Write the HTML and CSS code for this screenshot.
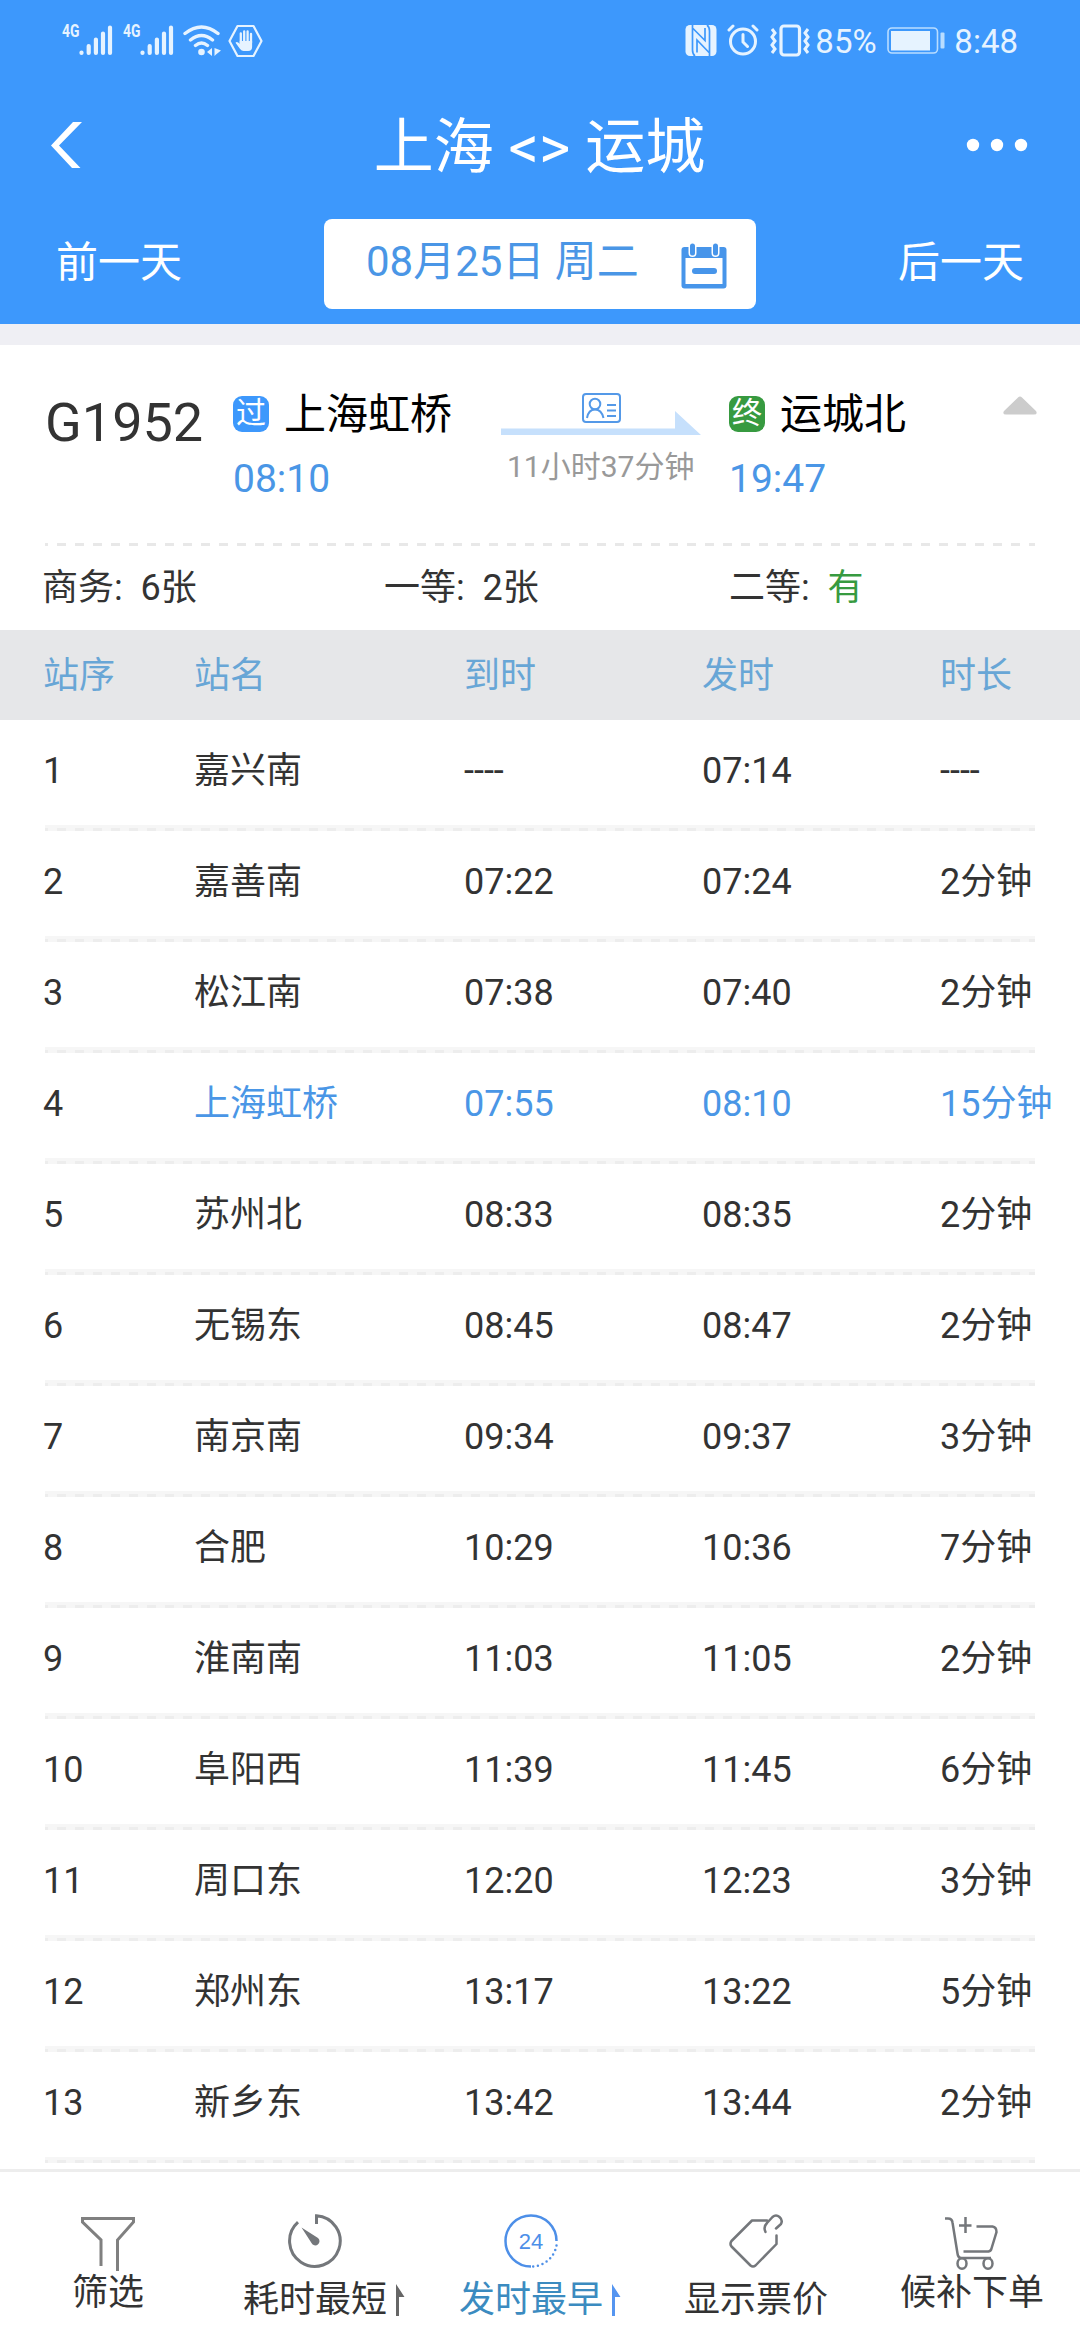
FILE: index.html
```html
<!DOCTYPE html>
<html lang="zh-CN">
<head>
<meta charset="utf-8">
<title>上海 - 运城</title>
<link rel="stylesheet" href="styles.css">
</head>
<body>
<header class="top">
  <div class="status">
    <div class="status-left">
      <span class="net">4G</span>
      <svg class="bars" width="34" height="32" viewBox="0 0 34 32"><path d="M2.500 27.500v.5M9.700 21v7M16.900 14.500v13.500M24 8.500v19.500M31 2.500v25.500"/></svg>
      <span class="net net-2">4G</span>
      <svg class="bars" width="34" height="32" viewBox="0 0 34 32"><path d="M2.500 27.500v.5M9.700 21v7M16.900 14.500v13.500M24 8.500v19.500M31 2.500v25.500"/></svg>
      <svg class="wifi" width="38" height="32" viewBox="0 0 38 32"><g fill="none" stroke="#e6f3ff" stroke-width="3.400" stroke-linecap="round"><path d="M2 8.500Q18.500-4.500 35 8.500M7.500 15Q18.500 6 29.500 15M12.500 20.500Q18.500 15.500 24.500 20.500"/></g><circle cx="18.500" cy="27" r="3.300" fill="#e6f3ff"/><path d="M24 27l5-4v8zM31.500 23v8l1.500-1.500 5-4z" fill="#e6f3ff"/></svg>
      <svg class="hand" width="35" height="34" viewBox="0 0 35 34"><path d="M9.500 2h16l8 15-8 15h-16l-8-15z" fill="none" stroke="#e6f3ff" stroke-width="2.200" stroke-linejoin="round"/><g stroke="#e6f3ff" stroke-width="2.300" stroke-linecap="round"><path d="M12.800 9.500v9M16.200 7.500v11M19.600 7.500v11M23 10v9"/></g><path d="M11.700 17H24.100v6q0 4-4 4h-4.500q-2 0-3.500-2L7.500 18.700q1.500-1.700 4.200 1z" fill="#e6f3ff"/></svg>
    </div>
    <div class="status-right">
      <svg class="nfc" width="32" height="33" viewBox="0 0 32 33"><rect x=".5" y="1" width="31" height="31" rx="4.500" fill="#e6f3ff"/><path d="M7.500 1v25q0 4 2.500 6M24.500 32V7q0-4-2.500-6M7.500 4L20 16.500V4M24.500 29L12 16v12.500" fill="none" stroke="#3d98fc" stroke-width="1.700"/></svg>
      <svg class="alarm" width="32" height="32" viewBox="0 0 32 32"><g fill="none" stroke="#e6f3ff" stroke-width="3" stroke-linecap="round"><circle cx="16" cy="17.500" r="12.500"/><path d="M2 6l4-4M30 6l-4-4M16 10.500v7.500l4.500 4.500"/></g></svg>
      <svg class="vibrate" width="40" height="33" viewBox="0 0 40 33"><g fill="none" stroke="#e6f3ff" stroke-width="3.200"><rect x="11" y="2" width="18.500" height="29" rx="3"/><path d="M2 5l3 4-3 4 3 4-3 4 3 4-3 4M38 5l-3 4 3 4-3 4 3 4-3 4 3 4" stroke-width="3"/></g></svg>
      <span class="pct">85%</span>
      <svg class="battery" width="58" height="27" viewBox="0 0 58 27"><rect x="1" y="1" width="49.500" height="25" rx="4" fill="none" stroke="#b9ddff" stroke-width="1.600"/><rect x="4" y="4" width="39" height="19.500" fill="#e6f3ff"/><rect x="53.500" y="5.500" width="4" height="16" rx="1" fill="#b9ddff"/></svg>
      <span class="clock">8:48</span>
    </div>
  </div>
  <div class="nav">
    <svg width="34" height="48" viewBox="0 0 34 48"><path d="M23 1h9L9 24.500 30.500 47h-8.500L1 24.500z" fill="#fff"/></svg>
    <h1 class="title">上海 &lt;&gt; 运城</h1>
    <svg width="62" height="14" viewBox="0 0 62 14" fill="#fff"><circle cx="7" cy="7" r="6.200"/><circle cx="31" cy="7" r="6.200"/><circle cx="55" cy="7" r="6.200"/></svg>
  </div>
  <div class="days">
    <span class="day">前一天</span>
    <div class="date">
      <span>08月25日 周二</span>
      <svg width="46" height="46" viewBox="0 0 46 46"><rect x=".5" y="4" width="45" height="41.500" rx="3" fill="#4795ea"/><rect x="4.500" y="15" width="37" height="26" fill="#fff"/><path d="M14 28h19" stroke="#4795ea" stroke-width="6" stroke-linecap="round"/><g stroke-linecap="round"><path d="M11.500 4v6M34.500 4v6" stroke="#fff" stroke-width="8"/><path d="M11.500 3v7M34.500 3v7" stroke="#4795ea" stroke-width="5"/></g></svg>
    </div>
    <span class="day">后一天</span>
  </div>
</header>

<main>
  <section class="train">
    <div class="number">G1952</div>
    <div class="stop from">
      <div class="place"><span class="badge pass">过</span><span class="name">上海虹桥</span></div>
      <div class="time">08:10</div>
    </div>
    <div class="trip">
      <svg width="200" height="44" viewBox="0 0 200 44"><path d="M0 36.500h174V19l26 24H0z" fill="#c6e0fc"/><g fill="none" stroke="#5499e8" stroke-width="2"><rect x="82" y="2" width="37" height="28" rx="3"/><circle cx="94" cy="12" r="5.300"/><path d="M86 26q1.500-8.500 8-8.500t8.500 8.500M106 13h9M106 18.500h9M106 24h9"/></g></svg>
      <div class="duration">11小时37分钟</div>
    </div>
    <div class="stop to">
      <div class="place"><span class="badge final">终</span><span class="name">运城北</span></div>
      <div class="time">19:47</div>
    </div>
    <svg class="fold" width="34" height="19" viewBox="0 0 34 19"><path d="M15 1.500q2-2 4 0l14 13.500q2 3.500-2 3.500H3q-4 0-2-3.500z" fill="#ccc"/></svg>
  </section>
  <div class="dash"></div>
  <section class="seats">
    <span>商务:&nbsp; 6张</span><span>一等:&nbsp; 2张</span><span>二等:&nbsp; <b class="yes">有</b></span>
  </section>

  <section class="stops">
    <div class="head"><span>站序</span><span>站名</span><span>到时</span><span>发时</span><span>时长</span></div>
    <div class="row"><span>1</span><span>嘉兴南</span><span>----</span><span>07:14</span><span>----</span></div>
    <div class="row"><span>2</span><span>嘉善南</span><span>07:22</span><span>07:24</span><span>2分钟</span></div>
    <div class="row"><span>3</span><span>松江南</span><span>07:38</span><span>07:40</span><span>2分钟</span></div>
    <div class="row current"><span>4</span><span>上海虹桥</span><span>07:55</span><span>08:10</span><span>15分钟</span></div>
    <div class="row"><span>5</span><span>苏州北</span><span>08:33</span><span>08:35</span><span>2分钟</span></div>
    <div class="row"><span>6</span><span>无锡东</span><span>08:45</span><span>08:47</span><span>2分钟</span></div>
    <div class="row"><span>7</span><span>南京南</span><span>09:34</span><span>09:37</span><span>3分钟</span></div>
    <div class="row"><span>8</span><span>合肥</span><span>10:29</span><span>10:36</span><span>7分钟</span></div>
    <div class="row"><span>9</span><span>淮南南</span><span>11:03</span><span>11:05</span><span>2分钟</span></div>
    <div class="row"><span>10</span><span>阜阳西</span><span>11:39</span><span>11:45</span><span>6分钟</span></div>
    <div class="row"><span>11</span><span>周口东</span><span>12:20</span><span>12:23</span><span>3分钟</span></div>
    <div class="row"><span>12</span><span>郑州东</span><span>13:17</span><span>13:22</span><span>5分钟</span></div>
    <div class="row"><span>13</span><span>新乡东</span><span>13:42</span><span>13:44</span><span>2分钟</span></div>
  </section>
</main>

<footer class="tabs">
  <div class="tab short">
    <div class="tab-body">
      <svg width="54" height="54" viewBox="0 0 54 54"><path d="M20 49V23L1.500 5V1.500h51V5L36.500 23v31" fill="none" stroke="#808080" stroke-width="3"/></svg>
      <span>筛选</span>
    </div>
  </div>
  <div class="tab">
    <div class="tab-body">
      <svg width="54" height="54" viewBox="0 0 54 54"><path d="M28.500 10V1.800A25.300 25.300 0 1 1 10 8.200" fill="none" stroke="#74777b" stroke-width="3"/><path d="M13.500 13.500L30 24a4.200 4.200 0 1 1-6.500 5z" fill="#74777b"/></svg>
      <span>耗时最短</span>
    </div>
    <svg class="up" width="9" height="32" viewBox="0 0 9 32" fill="#666"><path d="M0 0l8.500 13H3v19H0z"/></svg>
  </div>
  <div class="tab active">
    <div class="tab-body">
      <svg width="54" height="54" viewBox="0 0 54 54"><g fill="none" stroke="#4d8fe8" stroke-width="2.500"><path d="M27 52.500A25.500 25.500 0 1 1 52.500 27"/><path d="M52.500 31.500A25.500 25.500 0 0 1 29 52.500" stroke-dasharray="0 4.800" stroke-linecap="round"/></g><text class="day-hours" x="27" y="35" text-anchor="middle" fill="#4d8fe8">24</text></svg>
      <span>发时最早</span>
    </div>
    <svg class="up" width="9" height="32" viewBox="0 0 9 32" fill="#5595f0"><path d="M0 0l8.500 13H3v19H0z"/></svg>
  </div>
  <div class="tab">
    <div class="tab-body">
      <svg width="54" height="54" viewBox="0 0 54 54"><path d="M38 6.500H23L2.500 27q-2 3 0 5.500l19 19q2.500 2 5 0L47.500 30V21.500M36.500 18Q34 13 38 9l5.500-6Q47 0 50.500 3t1.500 7l-5 4.500" fill="none" stroke="#74777b" stroke-width="2.500" stroke-linecap="round" stroke-linejoin="round"/></svg>
      <span>显示票价</span>
    </div>
  </div>
  <div class="tab short">
    <div class="tab-body">
      <svg width="54" height="54" viewBox="0 0 54 54"><g fill="none" stroke="#74777b" stroke-width="2.500"><path d="M0 1.500h3q4 0 4.500 4l5 31q.5 4.500 4 4.500h29.500M18.500 34.500h25q2.500-.5 3-3L51.500 15q0-5-4-5.500H31.500M20.500 0v16M14 8.500h12.500"/><ellipse cx="17" cy="46.500" rx="4.500" ry="5.200"/><ellipse cx="43" cy="46.500" rx="4.500" ry="5.200"/></g></svg>
      <span>候补下单</span>
    </div>
  </div>
</footer>
</body>
</html>
```
FILE: styles.css
```css
* { box-sizing: border-box; margin: 0; padding: 0; }

body {
  width: 1080px;
  height: 2340px;
  overflow: hidden;
  background: #fff;
  color: #333;
  font-family: Roboto, "Noto Sans CJK SC", sans-serif;
  font-size: 36px;
}

svg { display: block; flex: none; }
span, div { white-space: nowrap; }

.top {
  height: 345px;
  background: #3d98fc;
  border-bottom: 21px solid #efeff4;
  color: #fff;
}

.status {
  display: flex;
  justify-content: space-between;
  height: 82px;
  padding: 24px 62px 0;
  color: #e6f3ff;
}
.status-left, .status-right { display: flex; align-items: flex-start; }
.net {
  width: 17px;
  font-size: 18.5px;
  font-weight: 700;
  line-height: 15px;
  transform: scaleX(.75);
  transform-origin: left;
}
.net-2 { margin-left: 10px; }
.bars { fill: none; stroke: #e6f3ff; stroke-width: 4.2; stroke-linecap: round; margin-top: 1px; }
.wifi { margin-left: 9px; margin-top: 1px; }
.hand { margin-left: 7px; }
.alarm { margin-left: 10px; }
.vibrate { margin-left: 11px; }
.pct { margin-left: 5px; width: 72px; font-size: 33px; line-height: 33px; margin-top: 1px; }
.battery { margin-top: 3px; }
.clock { margin-left: 9px; font-size: 33px; line-height: 33px; margin-top: 1px; }

.nav {
  display: flex;
  align-items: center;
  justify-content: space-between;
  height: 125px;
  padding: 0 52px 0 50px;
}
.title { font-size: 60px; line-height: 60px; font-weight: 400; margin-top: 6px; margin-left: 29px; }

.days {
  display: flex;
  align-items: flex-start;
  justify-content: space-between;
  padding: 12px 56px 0;
}
.day { font-size: 42px; line-height: 87px; }
.date {
  display: flex;
  justify-content: space-between;
  width: 432px;
  height: 90px;
  padding: 24px 29px 0 42px;
  background: #fff;
  border-radius: 8px;
  color: #4a96e6;
  font-size: 42px;
  line-height: 38px;
}

.train {
  display: grid;
  grid-template-columns: 188px 268px 228px 273px 34px;
  height: 198px;
  padding-left: 45px;
}
.number { padding-top: 51px; font-size: 54px; line-height: 54px; }
.stop { padding-top: 48px; }
.place { display: flex; align-items: center; height: 42px; font-size: 42px; color: #000; }
.name { line-height: 42px; padding-top: 2px; }
.badge {
  width: 36px;
  height: 36px;
  margin-right: 15px;
  border-radius: 9px;
  color: #fff;
  font-size: 30px;
  line-height: 34px;
  text-align: center;
}
.pass { background: #3d98fc; }
.final { background: #379a40; }
.time { margin-top: 25px; font-size: 39px; line-height: 39px; color: #4a96e6; }
.trip { padding-top: 47px; }
.duration { margin-top: 15px; padding-left: 6px; font-size: 30px; line-height: 32px; color: #999; }
.fold { margin: 51px 0 0 1px; }

.dash {
  height: 3px;
  margin: 0 45px;
  background: repeating-linear-gradient(90deg, #e8e8e8 0 3px, #fff 3px 12px, #e8e8e8 12px 18px);
}

.seats {
  display: grid;
  grid-template-columns: 342px 345px 1fr;
  height: 84px;
  padding-left: 42px;
  line-height: 84px;
}
.yes { font-weight: 400; color: #379a40; }

.head, .row {
  display: grid;
  grid-template-columns: 151px 270px 238px 238px 1fr;
  padding-left: 43px;
}
.head { height: 90px; background: #e6e7e9; color: #68a6d6; line-height: 92px; }
.row {
  position: relative;
  height: 111px;
  line-height: 102px;
}
.row::after {
  content: "";
  position: absolute;
  left: 45px;
  right: 45px;
  bottom: 0;
  height: 6px;
  background:
    repeating-linear-gradient(90deg, #ededed 0 3px, #f6f6f6 3px 12px, #ededed 12px 18px) bottom / 100% 3px no-repeat,
    #f6f6f6;
}
.current span:not(:first-child) { color: #4a96e6; }

.tabs {
  display: grid;
  grid-template-columns: repeat(5, 216px);
  height: 171px;
  margin-top: 6px;
  border-top: 3px solid #ededed;
}
.tab { display: flex; justify-content: center; padding-top: 42px; }
.short { padding-top: 45px; }
.tab-body { display: flex; flex-direction: column; align-items: center; line-height: 36px; }
.tab-body span { margin-top: 14px; }
.short .tab-body span { margin-top: 4px; }
.up { margin: 70px 0 0 9px; }
.active { color: #3b8bc0; }
.day-hours { font: 22px "Liberation Sans", sans-serif; }
```
